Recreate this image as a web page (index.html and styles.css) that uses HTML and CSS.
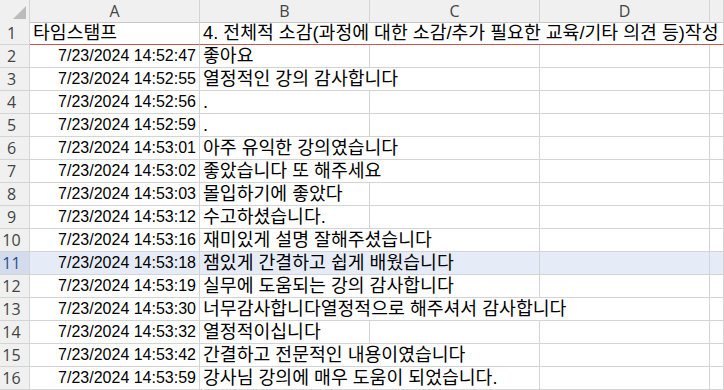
FILE: index.html
```html
<!DOCTYPE html>
<html lang="ko">
<head>
<meta charset="utf-8">
<link rel="stylesheet" href="styles.css">
</head>
<body>
<div class="sheet">
  <div class="row head">
    <div class="corner"><svg width="20" height="20" viewBox="0 0 20 20"><polygon points="17,4 17,17 4,17" fill="#bcbcbc"/></svg></div>
    <div class="colh">A</div>
    <div class="colh">B</div>
    <div class="colh">C</div>
    <div class="colh">D</div>
    <div class="colh"></div>
  </div>
  <div class="row first">
    <div class="rh">1</div>
    <div class="c">타임스탬프</div>
    <div class="c span4">4. 전체적 소감(과정에 대한 소감/추가 필요한 교육/기타 의견 등)작성</div>
  </div>
  <div class="row"><div class="rh">2</div><div class="c num">7/23/2024 14:52:47</div><div class="c">좋아요</div><div class="c"></div><div class="c"></div><div class="c"></div></div>
  <div class="row"><div class="rh">3</div><div class="c num">7/23/2024 14:52:55</div><div class="c span2">열정적인 강의 감사합니다</div><div class="c"></div><div class="c"></div></div>
  <div class="row"><div class="rh">4</div><div class="c num">7/23/2024 14:52:56</div><div class="c">.</div><div class="c"></div><div class="c"></div><div class="c"></div></div>
  <div class="row"><div class="rh">5</div><div class="c num">7/23/2024 14:52:59</div><div class="c">.</div><div class="c"></div><div class="c"></div><div class="c"></div></div>
  <div class="row"><div class="rh">6</div><div class="c num">7/23/2024 14:53:01</div><div class="c span2">아주 유익한 강의였습니다</div><div class="c"></div><div class="c"></div></div>
  <div class="row"><div class="rh">7</div><div class="c num">7/23/2024 14:53:02</div><div class="c span2">좋았습니다 또 해주세요</div><div class="c"></div><div class="c"></div></div>
  <div class="row"><div class="rh">8</div><div class="c num">7/23/2024 14:53:03</div><div class="c">몰입하기에 좋았다</div><div class="c"></div><div class="c"></div><div class="c"></div></div>
  <div class="row"><div class="rh">9</div><div class="c num">7/23/2024 14:53:12</div><div class="c">수고하셨습니다.</div><div class="c"></div><div class="c"></div><div class="c"></div></div>
  <div class="row"><div class="rh">10</div><div class="c num">7/23/2024 14:53:16</div><div class="c span2">재미있게 설명 잘해주셨습니다</div><div class="c"></div><div class="c"></div></div>
  <div class="row active"><div class="rh">11</div><div class="c num">7/23/2024 14:53:18</div><div class="c span2">잼있게 간결하고 쉽게 배웠습니다</div><div class="c"></div><div class="c"></div></div>
  <div class="row"><div class="rh">12</div><div class="c num">7/23/2024 14:53:19</div><div class="c span2">실무에 도움되는 강의 감사합니다</div><div class="c"></div><div class="c"></div></div>
  <div class="row"><div class="rh">13</div><div class="c num">7/23/2024 14:53:30</div><div class="c span3">너무감사합니다열정적으로 해주셔서 감사합니다</div><div class="c"></div></div>
  <div class="row"><div class="rh">14</div><div class="c num">7/23/2024 14:53:32</div><div class="c">열정적이십니다</div><div class="c"></div><div class="c"></div><div class="c"></div></div>
  <div class="row"><div class="rh">15</div><div class="c num">7/23/2024 14:53:42</div><div class="c span2">간결하고 전문적인 내용이였습니다</div><div class="c"></div><div class="c"></div></div>
  <div class="row"><div class="rh">16</div><div class="c num">7/23/2024 14:53:59</div><div class="c span2">강사님 강의에 매우 도움이 되었습니다.</div><div class="c"></div><div class="c"></div></div>
</div>
</body>
</html>
```
FILE: styles.css
```css
html, body {
  margin: 0;
  padding: 0;
  background: #ffffff;
  overflow: hidden;
}
.sheet {
  width: 724px;
  height: 390px;
  overflow: hidden;
  font-family: "Liberation Sans", "Noto Sans CJK KR", sans-serif;
  font-size: 18.3px;
  color: #000;
}
.row {
  display: grid;
  grid-template-columns: 30px 170px 170px 170px 170px 1fr;
  height: 23px;
}
.row > div {
  box-sizing: border-box;
  border-right: 1px solid #d4d4d4;
  border-bottom: 1px solid #d4d4d4;
  min-width: 0;
}
.head {
  height: 22px;
}
.head > div {
  background: #f0f0f0;
  border-bottom-color: #c8c8c8;
}
.corner {
  display: flex;
  align-items: flex-end;
  justify-content: flex-end;
}
.corner svg {
  display: block;
}
.colh {
  display: flex;
  align-items: center;
  justify-content: center;
  font-family: "Open Sans", "Liberation Sans", sans-serif;
  font-size: 16px;
  color: #444;
}
.rh {
  background: #f0f0f0;
  display: flex;
  align-items: center;
  justify-content: center;
  padding-right: 6px;
  font-family: "Open Sans", "Liberation Sans", sans-serif;
  font-size: 16px;
  color: #444;
}
.c {
  display: flex;
  align-items: center;
  padding: 0 3px;
  white-space: nowrap;
  overflow: hidden;
  line-height: 22px;
}
.num {
  justify-content: flex-end;
  font-size: 16px;
}
.span2 { grid-column: span 2; }
.span3 { grid-column: span 3; }
.span4 { grid-column: span 4; }
.first .c {
  border-bottom: 1px solid #c55a4a;
}
.first .rh {
  border-bottom-color: #d4d4d4;
}
.active .c {
  background: #e6ecf7;
}
.active .rh {
  background: #d3dcec;
  color: #2b4e8c;
}
```
